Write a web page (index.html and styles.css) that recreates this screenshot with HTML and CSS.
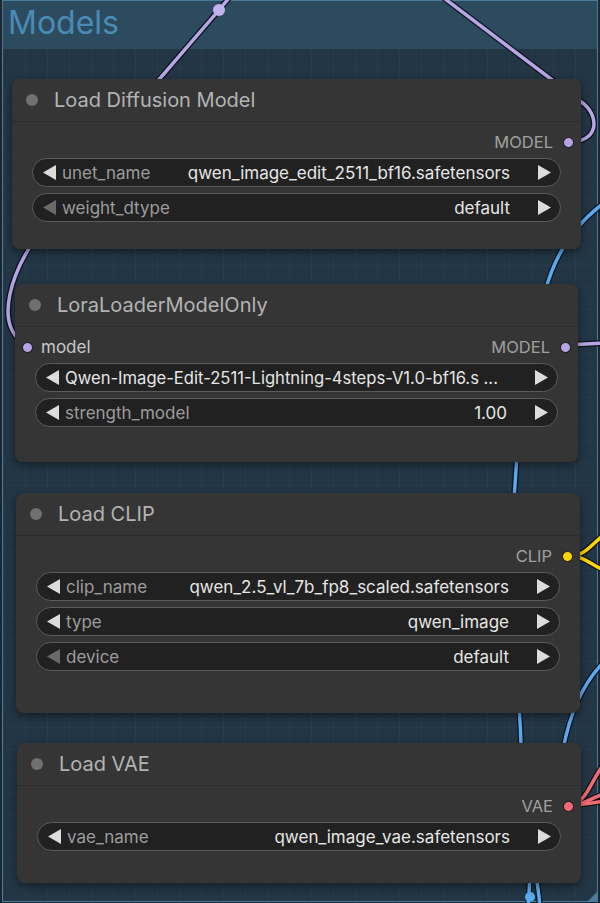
FILE: index.html
```html
<!DOCTYPE html>
<html lang="en">
<head>
    <meta charset="UTF-8">
    <meta name="viewport" content="width=device-width, initial-scale=1.0">
    <title>Models</title>
    <link rel="stylesheet" href="styles.css">
</head>
<body>

    <div class="canvas">
        <!-- Group frame with its nodes -->
        <div class="group">
            <div class="group-title">Models</div>
            <div class="group-body">

                <div class="node node-unet">
                    <div class="node-header">
                        <span class="node-dot"></span>
                        <span class="node-title">Load Diffusion Model</span>
                    </div>
                    <div class="node-body">
                        <div class="slots">
                            <span></span>
                            <span class="slot-out">MODEL <i class="socket socket-model"></i></span>
                        </div>
                        <div class="widget">
                            <span class="arrow arrow-left"></span>
                            <span class="w-label">unet_name</span>
                            <span class="w-value">qwen_image_edit_2511_bf16.safetensors</span>
                            <span class="arrow arrow-right"></span>
                        </div>
                        <div class="widget">
                            <span class="arrow arrow-left off"></span>
                            <span class="w-label">weight_dtype</span>
                            <span class="w-value">default</span>
                            <span class="arrow arrow-right"></span>
                        </div>
                    </div>
                </div>

                <div class="node node-lora">
                    <div class="node-header">
                        <span class="node-dot"></span>
                        <span class="node-title">LoraLoaderModelOnly</span>
                    </div>
                    <div class="node-body">
                        <div class="slots">
                            <span class="slot-in"><i class="socket socket-model"></i> model</span>
                            <span class="slot-out">MODEL <i class="socket socket-model"></i></span>
                        </div>
                        <div class="widget">
                            <span class="arrow arrow-left"></span>
                            <span class="w-value w-long">Qwen-Image-Edit-2511-Lightning-4steps-V1.0-bf16.s ...</span>
                            <span class="arrow arrow-right"></span>
                        </div>
                        <div class="widget">
                            <span class="arrow arrow-left"></span>
                            <span class="w-label">strength_model</span>
                            <span class="w-value">1.00</span>
                            <span class="arrow arrow-right"></span>
                        </div>
                    </div>
                </div>

                <div class="node node-clip">
                    <div class="node-header">
                        <span class="node-dot"></span>
                        <span class="node-title">Load CLIP</span>
                    </div>
                    <div class="node-body">
                        <div class="slots">
                            <span></span>
                            <span class="slot-out">CLIP <i class="socket socket-clip"></i></span>
                        </div>
                        <div class="widget">
                            <span class="arrow arrow-left"></span>
                            <span class="w-label">clip_name</span>
                            <span class="w-value">qwen_2.5_vl_7b_fp8_scaled.safetensors</span>
                            <span class="arrow arrow-right"></span>
                        </div>
                        <div class="widget">
                            <span class="arrow arrow-left"></span>
                            <span class="w-label">type</span>
                            <span class="w-value">qwen_image</span>
                            <span class="arrow arrow-right"></span>
                        </div>
                        <div class="widget">
                            <span class="arrow arrow-left off"></span>
                            <span class="w-label">device</span>
                            <span class="w-value">default</span>
                            <span class="arrow arrow-right"></span>
                        </div>
                    </div>
                </div>

                <div class="node node-vae">
                    <div class="node-header">
                        <span class="node-dot"></span>
                        <span class="node-title">Load VAE</span>
                    </div>
                    <div class="node-body">
                        <div class="slots">
                            <span></span>
                            <span class="slot-out">VAE <i class="socket socket-vae"></i></span>
                        </div>
                        <div class="widget">
                            <span class="arrow arrow-left"></span>
                            <span class="w-label">vae_name</span>
                            <span class="w-value">qwen_image_vae.safetensors</span>
                            <span class="arrow arrow-right"></span>
                        </div>
                    </div>
                </div>

            </div>
            <span class="group-resize"></span>
        </div>

        <!-- Links between node sockets -->
        <svg class="links" width="600" height="903" viewBox="0 0 600 903">
            <g class="link-shadow">
                <path d="M 234 -8 L 219 10 L 150 90"/>
                <path d="M 40 232 C 12 270, -8 325, 26 345"/>
                <path d="M 569 142 C 598 142, 600 118, 584 104 L 436 -8"/>
                <path d="M 566 345 L 604 343"/>
                <path d="M 604 203 C 578 222, 556 250, 545 292"/>
                <path d="M 517 455 L 514 500"/>
                <path d="M 519 706 C 520 720, 521 735, 521 750"/>
                <path d="M 604 662 C 584 682, 570 712, 563 750"/>
                <path d="M 530 875 L 528 910"/>
                <path d="M 536 875 C 538 890, 540 900, 540 910"/>
                <path d="M 568 556 C 586 556, 590 545, 604 535"/>
                <path d="M 568 556 C 586 556, 590 565, 604 570"/>
                <path d="M 568 805 C 586 805, 590 782, 604 764"/>
                <path d="M 568 805 C 586 805, 592 797, 604 794"/>
                <path d="M 568 805 C 586 805, 594 803, 604 801"/>
            </g>
            <g class="link link-model">
                <path d="M 234 -8 L 219 10 L 150 90"/>
                <path d="M 40 232 C 12 270, -8 325, 26 345"/>
                <path d="M 569 142 C 598 142, 600 118, 584 104 L 436 -8"/>
                <path d="M 566 345 L 604 343"/>
            </g>
            <g class="link link-blue">
                <path d="M 604 203 C 578 222, 556 250, 545 292"/>
                <path d="M 517 455 L 514 500"/>
                <path d="M 519 706 C 520 720, 521 735, 521 750"/>
                <path d="M 604 662 C 584 682, 570 712, 563 750"/>
                <path d="M 530 875 L 528 910"/>
                <path d="M 536 875 C 538 890, 540 900, 540 910"/>
            </g>
            <g class="link link-clip">
                <path d="M 568 556 C 586 556, 590 545, 604 535"/>
                <path d="M 568 556 C 586 556, 590 565, 604 570"/>
            </g>
            <g class="link link-vae">
                <path d="M 568 805 C 586 805, 590 782, 604 764"/>
                <path d="M 568 805 C 586 805, 592 797, 604 794"/>
                <path d="M 568 805 C 586 805, 594 803, 604 801"/>
            </g>
            <circle class="reroute" cx="219" cy="10" r="6"/>
            <circle class="reroute-blue" cx="530" cy="897" r="5"/>
        </svg>
    </div>

</body>
</html>
```
FILE: styles.css
```css
body {
    margin: 0;
    background: #1b2630;
    font-family: Inter, "Noto Sans", "Liberation Sans", sans-serif;
}

.canvas {
    position: relative;
    width: 600px;
    height: 903px;
    overflow: hidden;
    background: #1b2630;
}

/* group frame */

.group {
    position: relative;
    box-sizing: border-box;
    width: 596px;
    height: 902px;
    margin-left: 2px;
    border: 1px solid #4a7b99;
    background: #233645;
    background-image:
        linear-gradient(to right, rgba(255, 255, 255, 0.025) 1px, transparent 1px),
        linear-gradient(to bottom, rgba(255, 255, 255, 0.02) 1px, transparent 1px);
    background-size: 22px 22px;
}

.group-title {
    height: 48px;
    background: #2c4b5f;
    color: #4a8bb6;
    font-size: 32px;
    line-height: 44px;
    padding-left: 5px;
}

.group-body {
    display: flex;
    flex-direction: column;
    padding-top: 30px;
}

.group-resize {
    position: absolute;
    right: 0;
    bottom: 0;
    width: 0;
    height: 0;
    border-left: 9px solid transparent;
    border-bottom: 9px solid #4a7b99;
}

/* nodes */

.node {
    position: relative;
    z-index: 2;
    box-sizing: border-box;
    background: #353535;
    border-radius: 8px;
    box-shadow: 0 3px 8px rgba(0, 0, 0, 0.45);
}

.node-unet {
    margin-left: 9px;
    width: 569px;
    height: 170px;
}

.node-lora {
    margin-top: 35px;
    margin-left: 12px;
    width: 563px;
    height: 178px;
}

.node-clip {
    margin-top: 31px;
    margin-left: 13px;
    width: 564px;
    height: 220px;
}

.node-vae {
    margin-top: 30px;
    margin-left: 14px;
    width: 564px;
    height: 140px;
}

.node-header {
    display: flex;
    align-items: center;
    height: 42px;
    padding-left: 14px;
    border-bottom: 1px solid #2b2b2b;
}

.node-dot {
    width: 12px;
    height: 12px;
    border-radius: 50%;
    background: #707070;
}

.node-title {
    margin-left: 16px;
    font-size: 20px;
    color: #b3b3b3;
}

.node-body {
    display: flex;
    flex-direction: column;
    gap: 6px;
    padding-top: 8px;
}

.slots {
    display: flex;
    justify-content: space-between;
    align-items: center;
    height: 24px;
    margin-bottom: -2px;
    padding: 0 7px;
    font-size: 16.5px;
    color: #a0a0a0;
}

.slot-in {
    display: flex;
    align-items: center;
    gap: 8px;
    font-size: 17px;
    color: #c8c8c8;
}

.slot-out {
    display: flex;
    align-items: center;
    gap: 10px;
}

.socket {
    box-sizing: border-box;
    width: 11px;
    height: 11px;
    border-radius: 50%;
    border: 1px solid #151515;
}

.socket-model {
    background: #b5a3e3;
}

.socket-clip {
    background: #ffd500;
}

.socket-vae {
    background: #f26b73;
}

/* combo / number widgets */

.widget {
    display: flex;
    align-items: center;
    box-sizing: border-box;
    height: 29px;
    margin: 0 20px;
    padding: 0 9px 0 10px;
    border: 1px solid #5b5b5b;
    border-radius: 15px;
    background: #212121;
    font-size: 17px;
}

.arrow {
    width: 13px;
    height: 15px;
    background: #dcdcdc;
    flex-shrink: 0;
}

.arrow-left {
    clip-path: polygon(100% 0, 0 50%, 100% 100%);
}

.arrow-right {
    clip-path: polygon(0 0, 100% 50%, 0 100%);
}

.arrow.off {
    background: #6a6a6a;
}

.w-label {
    margin-left: 6px;
    color: #9c9c9c;
    white-space: nowrap;
}

.w-value {
    flex: 1;
    margin-right: 28px;
    text-align: right;
    color: #e6e6e6;
    white-space: nowrap;
    overflow: hidden;
}

/* long combo value hides its label */
.w-long {
    margin-left: 6px;
    margin-right: 22px;
    font-size: 16.6px;
    text-align: left;
    overflow: visible;
}

/* links layer */

.links {
    position: absolute;
    left: 0;
    top: 0;
    z-index: 1;
    pointer-events: none;
}

.links path {
    fill: none;
    stroke-linecap: round;
    stroke-linejoin: round;
}

.link-shadow path {
    stroke: rgba(8, 10, 14, 0.8);
    stroke-width: 6;
}

.link path {
    stroke-width: 3.5;
}

.link-model path {
    stroke: #b7a6e6;
}

.link-blue path {
    stroke: #5aaaf0;
}

.link-clip path {
    stroke: #ffd500;
}

.link-vae path {
    stroke: #f26b73;
}

.reroute {
    fill: #c2b2ee;
}

.reroute-blue {
    fill: #5aaaf0;
}
```
